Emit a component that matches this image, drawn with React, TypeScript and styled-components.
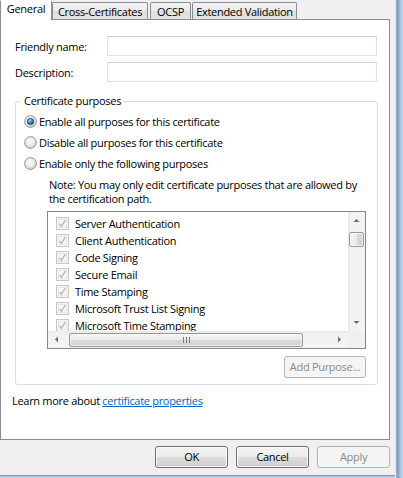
import React, { useId } from "react";
import styled, { createGlobalStyle } from "styled-components";

const Global = createGlobalStyle`
  html, body { margin: 0; padding: 0; background: #f0f0f0; }
  body {
    font-family: "Open Sans", "Noto Sans", sans-serif;
    font-size: 11px;
    letter-spacing: -0.3px;
    color: #000;
  }
  * { box-sizing: border-box; }
`;

const Window = styled.div`
  width: 403px;
  height: 478px;
  display: grid;
  grid-template-columns: 395px 8px;
  grid-template-rows: 475px 3px;
  background: #f0f0f0;
  overflow: hidden;
`;

const Client = styled.div`
  display: flex;
  flex-direction: column;
`;

const FrameRight = styled.div`
  grid-column: 2;
  grid-row: 1 / 3;
  border-left: 1px solid #dbe3ec;
  background: linear-gradient(to right, #9fb6d0 0, #7e9cc0 2px, #a8c2de 4px, #c3d6ea 7px);
`;

const FrameBottom = styled.div`
  grid-column: 1;
  grid-row: 2;
  border-top: 1px solid #7f95ae;
  background: linear-gradient(to bottom, #a9c1dc, #c6d8eb);
`;

const TabStrip = styled.div`
  display: flex;
  align-items: flex-end;
  height: 19px;
  position: relative;
  z-index: 2;
`;

const Tab = styled.div<{ $active?: boolean; $w: number; $ml?: number }>`
  width: ${(p) => p.$w}px;
  margin-left: ${(p) => p.$ml ?? 0}px;
  height: ${(p) => (p.$active ? 20 : 17)}px;
  margin-bottom: ${(p) => (p.$active ? -1 : 0)}px;
  border: 1px solid #898c95;
  border-bottom: 0;
  border-top-color: ${(p) => (p.$active ? "transparent" : "#898c95")};
  border-radius: 2px 2px 0 0;
  background: ${(p) =>
    p.$active
      ? "#fff"
      : "linear-gradient(to bottom, #f3f3f3 0%, #ebebeb 50%, #dedede 51%, #e4e4e4 100%)"};
  display: flex;
  align-items: center;
  justify-content: center;
  padding-top: ${(p) => (p.$active ? 0 : 1)}px;
  padding-bottom: ${(p) => (p.$active ? 3 : 0)}px;
  white-space: nowrap;
  line-height: 14px;
`;

const Panel = styled.div`
  width: 390px;
  height: 421px;
  background: #fff;
  border: 1px solid #898c95;
  padding: 16px 11px 0 11px;
  display: flex;
  flex-direction: column;
  align-items: flex-start;
  position: relative;
  z-index: 1;
`;

const FormRows = styled.div`
  display: flex;
  flex-direction: column;
  gap: 6px;
  padding-left: 3px;
`;

const FormRow = styled.div`
  display: grid;
  grid-template-columns: 92px 270px;
  align-items: center;
  height: 20px;
`;

const Label = styled.label`
  line-height: 14px;
  padding-top: 1px;
`;

const TextBox = styled.input`
  width: 270px;
  height: 20px;
  border: 1px solid #dfe2e6;
  border-top-color: #cdd0d5;
  background: #fff;
  outline: none;
  font: inherit;
  padding: 0 3px;
`;

const GroupBox = styled.fieldset`
  margin: 12px 0 0 3px;
  width: 363px;
  min-width: 0;
  border: 1px solid #d5dfe5;
  border-radius: 3px;
  padding: 0;
`;

const GroupLegend = styled.legend`
  margin-left: 5px;
  padding: 0 3px;
  line-height: 14px;
`;

const GroupBody = styled.div`
  display: flex;
  flex-direction: column;
  align-items: flex-start;
  padding: 3px 10px 6px 8px;
`;

const RadioRow = styled.label`
  display: flex;
  align-items: center;
  gap: 2px;
  height: 21px;
  line-height: 14px;
`;

const Note = styled.p`
  margin: 4px 0 0 25px;
  line-height: 14px;
  white-space: nowrap;
`;

const ListBox = styled.div`
  margin: 5px 0 0 23px;
  width: 319px;
  height: 138px;
  border: 1px solid #828790;
  background: #fff;
  display: grid;
  grid-template-columns: 300px 17px;
  grid-template-rows: 119px 17px;
`;

const ItemList = styled.ul`
  list-style: none;
  margin: 0;
  padding: 3px 0 0 8px;
  overflow: hidden;
`;

const Item = styled.li`
  display: flex;
  align-items: center;
  gap: 6px;
  height: 17px;
  line-height: 14px;
  white-space: nowrap;
`;

const VScroll = styled.div`
  display: flex;
  flex-direction: column;
  background: linear-gradient(to right, #e6e6e6 0, #f1f1f1 2px, #f4f4f4 100%);
`;

const HScroll = styled.div`
  display: flex;
  align-items: center;
  background: linear-gradient(to bottom, #e6e6e6 0, #f1f1f1 2px, #f4f4f4 100%);
`;

const Corner = styled.div`
  background: #f0f0f0;
`;

const ArrowButton = styled.div`
  width: 17px;
  height: 17px;
  flex: none;
  display: flex;
  align-items: center;
  justify-content: center;
`;

const Track = styled.div<{ $dir: "v" | "h" }>`
  flex: 1;
  display: flex;
  flex-direction: ${(p) => (p.$dir === "v" ? "column" : "row")};
  padding: ${(p) => (p.$dir === "v" ? "3px 1px" : "1px 4px")};
`;

const Thumb = styled.div<{ $dir: "v" | "h" }>`
  ${(p) =>
    p.$dir === "v"
      ? "width: 15px; height: 15px;"
      : "width: 234px; height: 14px;"}
  border: 1px solid #979797;
  border-radius: 2px;
  background: ${(p) =>
    p.$dir === "v"
      ? "linear-gradient(to right, #f5f5f5 0%, #eaeaea 50%, #d9d9d9 51%, #d2d2d2 100%)"
      : "linear-gradient(to bottom, #f5f5f5 0%, #eaeaea 50%, #d9d9d9 51%, #d2d2d2 100%)"};
  box-shadow: inset 0 0 0 1px rgba(255, 255, 255, 0.7);
  display: flex;
  align-items: center;
  justify-content: center;
`;

const AddButtonRow = styled.div`
  display: flex;
  justify-content: flex-end;
  align-self: stretch;
  margin-top: 7px;
  padding-right: 1px;
`;

const DialogButton = styled.button<{ $w: number; $disabled?: boolean }>`
  width: ${(p) => p.$w}px;
  height: 22px;
  font: inherit;
  letter-spacing: inherit;
  line-height: 14px;
  padding: 0;
  border-radius: 3px;
  border: 1px solid ${(p) => (p.$disabled ? "#adb2b5" : "#707070")};
  color: ${(p) => (p.$disabled ? "#8b8b8b" : "#000")};
  background: ${(p) =>
    p.$disabled
      ? "#f4f4f4"
      : "linear-gradient(to bottom, #f2f2f2 0%, #ebebeb 50%, #dddddd 51%, #cfcfcf 100%)"};
  box-shadow: inset 0 0 0 1px rgba(255, 255, 255, ${(p) => (p.$disabled ? 0.3 : 0.75)});
  cursor: default;
`;

const LearnMore = styled.p`
  margin: 8px 0 0 0;
  line-height: 16px;
`;

const Link = styled.a`
  color: #0066cc;
  text-decoration: underline;
`;

const ButtonBar = styled.div`
  display: flex;
  justify-content: flex-end;
  gap: 8px;
  margin-top: 6px;
  padding-right: 5px;
`;

function Radio({ checked }: { checked?: boolean }) {
  const id = useId().replace(/:/g, "");
  return (
    <svg width="13" height="13" viewBox="0 0 13 13" style={{ flex: "none" }}>
      <defs>
        <radialGradient id={`rf${id}`} cx="0.45" cy="0.4" r="0.6">
          <stop offset="0" stopColor="#fbfbfb" />
          <stop offset="0.6" stopColor="#e9e9e9" />
          <stop offset="1" stopColor="#c9c9c9" />
        </radialGradient>
        <radialGradient id={`rd${id}`} cx="0.4" cy="0.35" r="0.7">
          <stop offset="0" stopColor="#aee0fb" />
          <stop offset="0.45" stopColor="#3d8ac4" />
          <stop offset="1" stopColor="#164a7a" />
        </radialGradient>
      </defs>
      <circle cx="6.5" cy="6.5" r="5.9" fill={`url(#rf${id})`} stroke="#979797" strokeWidth="1" />
      {checked && <circle cx="6.5" cy="6.5" r="3.3" fill={`url(#rd${id})`} stroke="#1b4f7e" strokeWidth="0.6" />}
    </svg>
  );
}

function CheckBox() {
  return (
    <svg width="13" height="13" viewBox="0 0 13 13" style={{ flex: "none" }}>
      <rect x="0.5" y="0.5" width="12" height="12" fill="#f4f4f4" stroke="#c7c7c7" />
      <rect x="2.5" y="2.5" width="8" height="8" fill="#f7f7f7" stroke="#e6e6e6" />
      <path d="M3.6 6.8 L5.4 9.3 L9.4 3.2" fill="none" stroke="#b4b4b4" strokeWidth="1.3" />
    </svg>
  );
}

function Arrow({ dir }: { dir: "up" | "down" | "left" | "right" }) {
  const d = {
    up: "M0.5 4 L3.5 1 L6.5 4 Z",
    down: "M0.5 1 L3.5 4 L6.5 1 Z",
    left: "M4 0.5 L1 3.5 L4 6.5 Z",
    right: "M1 0.5 L4 3.5 L1 6.5 Z",
  }[dir];
  const vert = dir === "up" || dir === "down";
  return (
    <svg width={vert ? 7 : 5} height={vert ? 5 : 7} viewBox={vert ? "0 0 7 5" : "0 0 5 7"}>
      <path d={d} fill="#6d6d6d" />
    </svg>
  );
}

function Grip() {
  return (
    <svg width="7" height="6" viewBox="0 0 7 6">
      <path d="M0.5 0 V6 M3.5 0 V6 M6.5 0 V6" stroke="#7a7a7a" strokeWidth="1" />
    </svg>
  );
}

const purposes = [
  "Server Authentication",
  "Client Authentication",
  "Code Signing",
  "Secure Email",
  "Time Stamping",
  "Microsoft Trust List Signing",
  "Microsoft Time Stamping",
];

export default function App() {
  return (
    <>
      <Global />
      <Window>
        <Client>
          <TabStrip>
            <Tab $active $w={52}>General</Tab>
            <Tab $w={96}>Cross-Certificates</Tab>
            <Tab $w={41} $ml={2}>OCSP</Tab>
            <Tab $w={105} $ml={1}>Extended Validation</Tab>
          </TabStrip>
          <Panel>
            <FormRows>
              <FormRow>
                <Label>Friendly name:</Label>
                <TextBox value="" readOnly />
              </FormRow>
              <FormRow>
                <Label>Description:</Label>
                <TextBox value="" readOnly />
              </FormRow>
            </FormRows>
            <GroupBox>
              <GroupLegend>Certificate purposes</GroupLegend>
              <GroupBody>
                <RadioRow>
                  <Radio checked />
                  Enable all purposes for this certificate
                </RadioRow>
                <RadioRow>
                  <Radio />
                  Disable all purposes for this certificate
                </RadioRow>
                <RadioRow>
                  <Radio />
                  Enable only the following purposes
                </RadioRow>
                <Note>
                  Note: You may only edit certificate purposes that are allowed by
                  <br />
                  the certification path.
                </Note>
                <ListBox>
                  <ItemList>
                    {purposes.map((p) => (
                      <Item key={p}>
                        <CheckBox />
                        {p}
                      </Item>
                    ))}
                  </ItemList>
                  <VScroll>
                    <ArrowButton><Arrow dir="up" /></ArrowButton>
                    <Track $dir="v">
                      <Thumb $dir="v" />
                    </Track>
                    <ArrowButton><Arrow dir="down" /></ArrowButton>
                  </VScroll>
                  <HScroll>
                    <ArrowButton><Arrow dir="left" /></ArrowButton>
                    <Track $dir="h">
                      <Thumb $dir="h"><Grip /></Thumb>
                    </Track>
                    <ArrowButton><Arrow dir="right" /></ArrowButton>
                  </HScroll>
                  <Corner />
                </ListBox>
                <AddButtonRow>
                  <DialogButton $w={82} $disabled>Add Purpose...</DialogButton>
                </AddButtonRow>
              </GroupBody>
            </GroupBox>
            <LearnMore>
              Learn more about <Link href="#">certificate properties</Link>
            </LearnMore>
          </Panel>
          <ButtonBar>
            <DialogButton $w={73}>OK</DialogButton>
            <DialogButton $w={73}>Cancel</DialogButton>
            <DialogButton $w={73} $disabled>Apply</DialogButton>
          </ButtonBar>
        </Client>
        <FrameRight />
        <FrameBottom />
      </Window>
    </>
  );
}
